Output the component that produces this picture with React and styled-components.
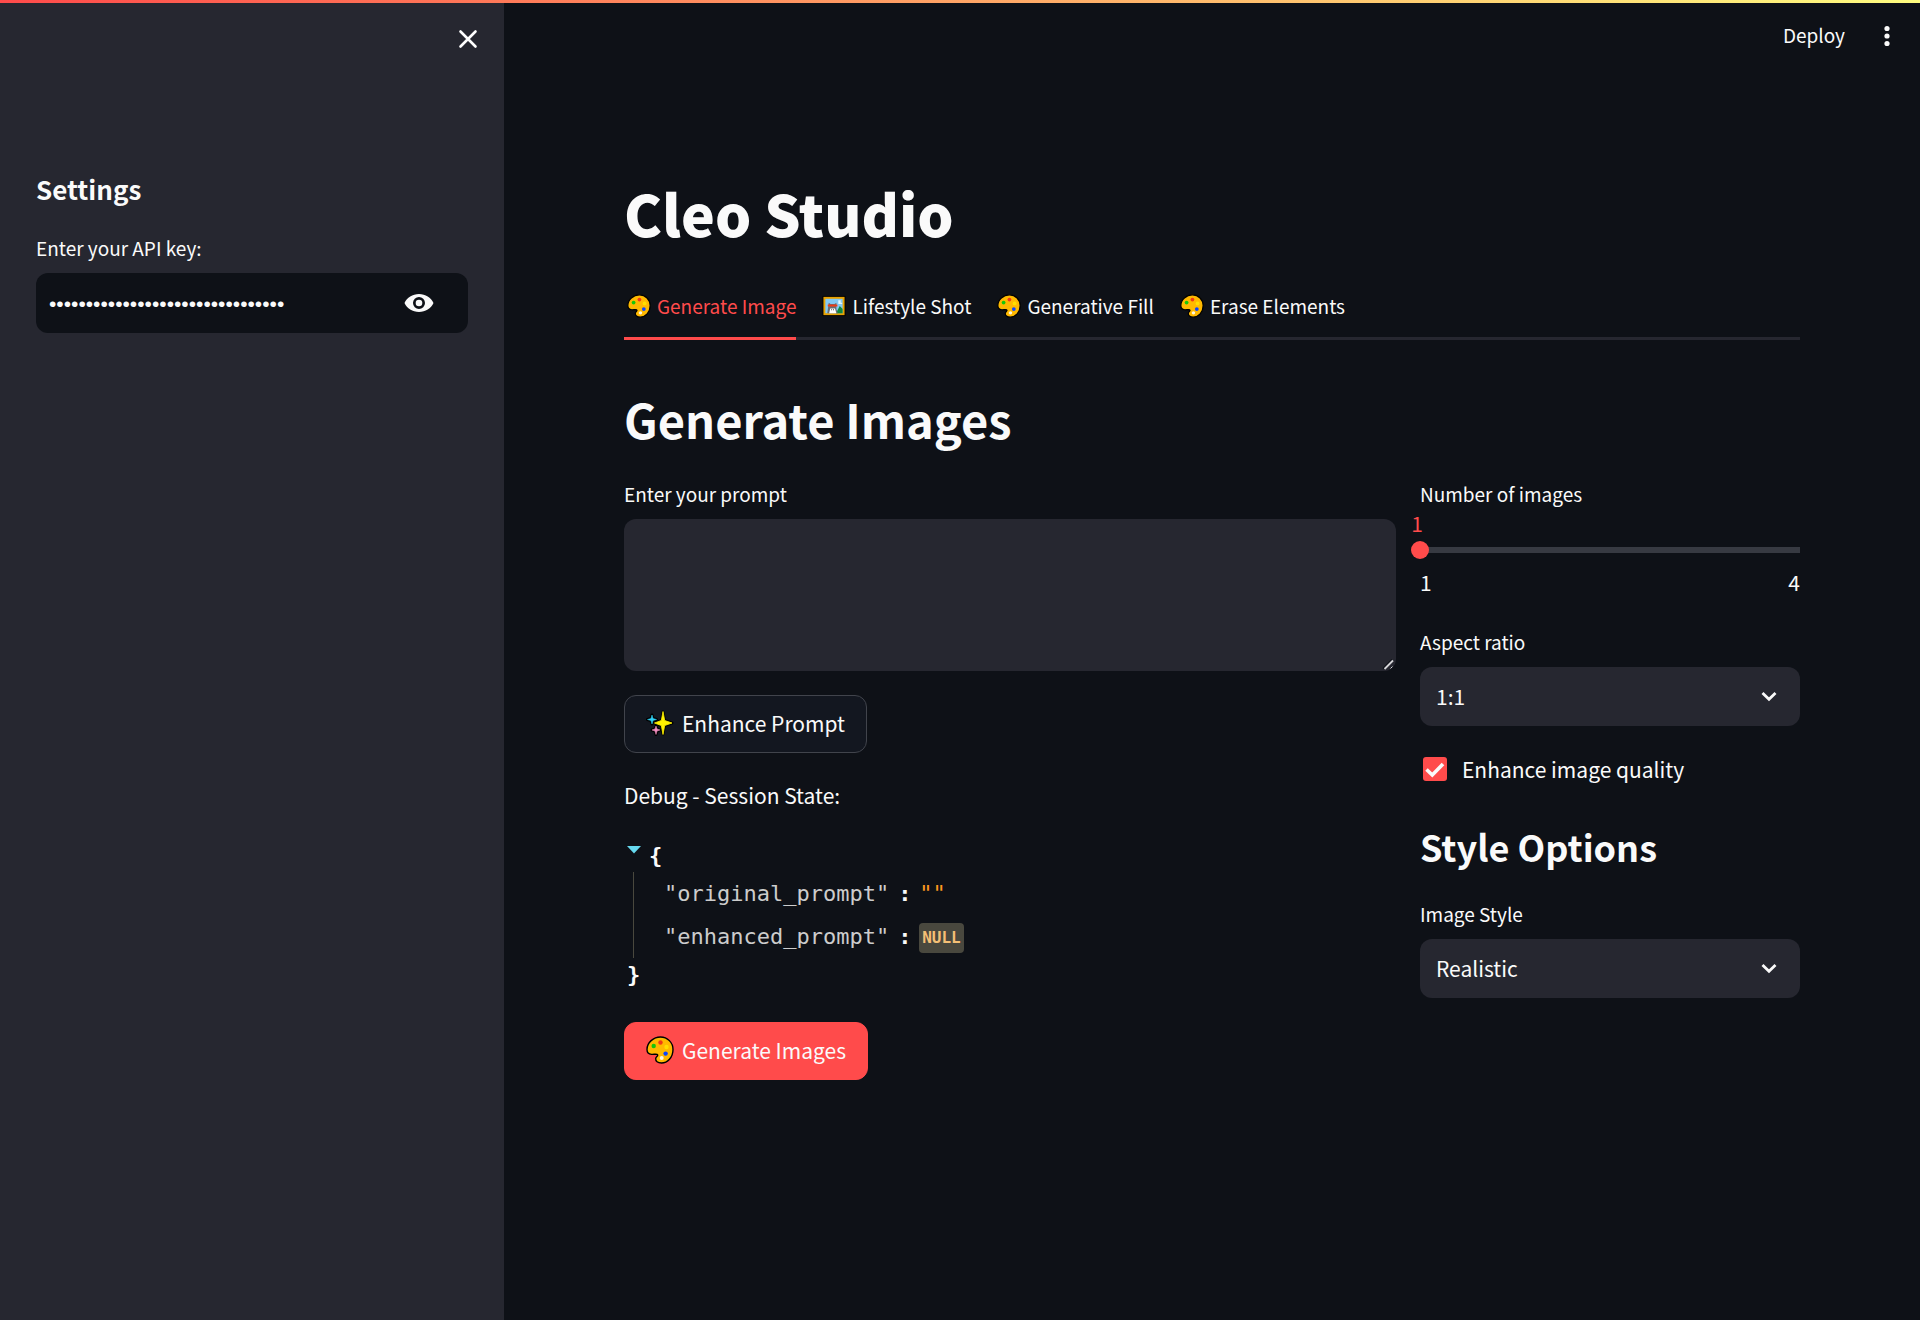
import React, { useState } from "react";
import styled, { createGlobalStyle } from "styled-components";

const sans = `"Noto Sans CJK SC", "Noto Sans", sans-serif`;
const mono = `"DejaVu Sans Mono", monospace`;

const GlobalStyle = createGlobalStyle`
  *, *::before, *::after { box-sizing: border-box; }
  body {
    margin: 0;
    background: #0e1117;
    color: #fafafa;
    font-family: ${sans};
    font-size: 21px;
    line-height: 36px;
  }
  button, input, select, textarea { font: inherit; color: inherit; margin: 0; }
`;

const Page = styled.div`
  display: flex;
  min-height: 100vh;
`;

const Decoration = styled.div`
  position: absolute;
  top: 0;
  left: 0;
  right: 0;
  height: 3px;
  background: linear-gradient(90deg, #ff4b4b, #fffd80);
`;

const Sidebar = styled.aside`
  flex: 0 0 504px;
  background: #262730;
  padding: 18px 36px;
`;

const SidebarTop = styled.div`
  display: flex;
  justify-content: flex-end;
  height: 42px;
  margin-bottom: 108px;
`;

const IconButton = styled.button`
  display: grid;
  place-items: center;
  width: 42px;
  height: 42px;
  padding: 0;
  border: 0;
  background: none;
  cursor: pointer;
  margin-right: ${(p) => p.$pull || 0}px;
`;

const SidebarTitle = styled.h2`
  margin: 0 0 23px;
  font-size: 26px;
  line-height: 42px;
  font-weight: 700;
`;

const Label = styled.label`
  display: block;
  margin-bottom: ${(p) => (p.$tight ? 0 : 10)}px;
  font-size: 19px;
  line-height: 30px;
`;

const PasswordBox = styled.div`
  display: flex;
  align-items: center;
  height: 60px;
  padding: 0 28px 0 13px;
  border-radius: 12px;
  background: #0e1117;
`;

const PasswordInput = styled.input`
  flex: 1;
  min-width: 0;
  padding: 2px 0 0;
  border: 0;
  outline: 0;
  background: none;
  font-family: "Liberation Sans", sans-serif;
  font-size: 21px;
`;

const Main = styled.main`
  flex: 1;
  min-width: 0;
`;

const Header = styled.header`
  display: flex;
  align-items: center;
  justify-content: flex-end;
  gap: 21px;
  height: 72px;
  padding-right: 12px;
`;

const DeployButton = styled.button`
  padding: 0 0 2px;
  border: 0;
  background: none;
  font-size: 19px;
  line-height: 30px;
  cursor: pointer;
`;

const Content = styled.div`
  padding: 100px 120px 120px;
`;

const Title = styled.h1`
  margin: 0 0 24px;
  font-size: 57px;
  line-height: 80px;
  font-weight: 900;
`;

const TabList = styled.div`
  display: flex;
  gap: 23px;
  border-bottom: 3px solid #262730;
`;

const Tab = styled.button`
  display: flex;
  align-items: center;
  gap: 6px;
  height: 64px;
  margin-bottom: -3px;
  padding: 0 0 2px;
  border: 0;
  border-bottom: 3px solid ${(p) => (p.$active ? "#ff4b4b" : "transparent")};
  background: none;
  color: ${(p) => (p.$active ? "#ff4b4b" : "#fafafa")};
  font-size: 19px;
  line-height: 30px;
  white-space: nowrap;
  cursor: pointer;
  > svg { margin-left: 3px; }
`;

const SectionTitle = styled.h2`
  margin: 49px 0 30px;
  font-size: 47px;
  line-height: 60px;
  font-weight: 700;
`;

const Columns = styled.div`
  display: flex;
  align-items: flex-start;
  gap: 24px;
`;

const Column = styled.div`
  flex: 0 0 calc(100% * ${(p) => p.$span} / 3 - 12px);
  min-width: 0;
`;

const PromptBox = styled.div`
  display: grid;
  > * { grid-area: 1 / 1; }
  > svg {
    place-self: end;
    pointer-events: none;
  }
`;

const PromptArea = styled.textarea`
  display: block;
  width: 100%;
  height: 152px;
  padding: 16px;
  border: 0;
  border-radius: 12px;
  outline: 0;
  background: #262730;
  resize: vertical;
  &::-webkit-resizer { background: transparent; }
`;

const ActionButton = styled.button`
  display: flex;
  align-items: center;
  gap: 8px;
  height: 58px;
  margin: ${(p) => (p.$primary ? "31px 0 0" : "24px 0")};
  padding: 0 21px 2px;
  border: 1px solid ${(p) => (p.$primary ? "#ff4b4b" : "#41444c")};
  border-radius: 12px;
  background: ${(p) => (p.$primary ? "#ff4b4b" : "#131720")};
  white-space: nowrap;
  cursor: pointer;
`;

const Text = styled.p`
  margin: 0 0 26px;
`;

const Json = styled.div`
  font-family: ${mono};
  font-size: 22px;
`;

const JsonBrace = styled.div`
  display: flex;
  align-items: center;
  gap: 8px;
  height: 33px;
  padding-left: 3px;
  font-weight: 700;
`;

const JsonBody = styled.div`
  margin-left: 9px;
  padding-left: 30px;
  border-left: 1px solid #49483e;
`;

const JsonRow = styled.div`
  display: flex;
  align-items: center;
  height: 43px;
  white-space: pre;
`;

const JsonKey = styled.span`
  color: #cccccc;
`;

const JsonColon = styled.span`
  width: 30px;
  padding-left: 9px;
  font-weight: 700;
`;

const JsonString = styled.span`
  color: #fd971f;
`;

const JsonNull = styled.span`
  height: 30px;
  margin-top: 3px;
  padding: 0 3px;
  border-radius: 4px;
  background: #49483e;
  color: #f4bf75;
  font-size: 16px;
  line-height: 30px;
  font-weight: 700;
`;

const SliderField = styled.div`
  margin-bottom: 30px;
`;

const SliderValue = styled.output`
  display: block;
  width: 18px;
  margin-left: -12px;
  text-align: center;
  color: #ff4b4b;
  font-size: 21px;
  line-height: 28px;
`;

const Range = styled.input`
  display: block;
  appearance: none;
  width: calc(100% + 18px);
  height: 22px;
  margin: 2px -9px 0;
  background: none;
  &::-webkit-slider-runnable-track {
    height: 6px;
    background: linear-gradient(90deg, transparent 9px, #373a42 9px, #373a42 calc(100% - 9px), transparent calc(100% - 9px));
  }
  &::-webkit-slider-thumb {
    appearance: none;
    width: 18px;
    height: 18px;
    margin-top: -6px;
    border-radius: 50%;
    background: #ff4b4b;
  }
`;

const Ticks = styled.div`
  display: flex;
  justify-content: space-between;
  margin-top: 6px;
  line-height: 30px;
`;

const SelectBox = styled.div`
  display: grid;
  align-items: center;
  > * { grid-area: 1 / 1; }
  > svg {
    justify-self: end;
    margin: 0 17px 2px 0;
    pointer-events: none;
  }
`;

const Select = styled.select`
  appearance: none;
  width: 100%;
  height: 59px;
  padding: 0 16px 2px;
  border: 0;
  border-radius: 12px;
  outline: 0;
  background: #262730;
`;

const CheckLabel = styled.label`
  display: flex;
  align-items: center;
  gap: 15px;
  margin: 25px 0 34px;
  padding-left: 3px;
  height: 36px;
`;

const CheckBox = styled.span`
  display: grid;
  place-items: center;
  > * { grid-area: 1 / 1; }
  > svg { pointer-events: none; }
`;

const CheckInput = styled.input`
  appearance: none;
  width: 24px;
  height: 24px;
  border-radius: 3px;
  background: #ff4b4b;
`;

const SubTitle = styled.h3`
  margin: 0 0 28px;
  font-size: 36px;
  line-height: 50px;
  font-weight: 700;
`;

function Palette({ size }) {
  return (
    <svg width={size} height={size} viewBox="0 0 28 28" aria-hidden="true">
      <path
        d="M14.500 1C21.500 1 27 6.500 27 13.500C27 21.500 21.500 27 15.500 27C11.500 27 9.500 25.200 9.700 22.500C9.900 20.700 12 20.300 11.700 18.900C11.300 17.600 8 18.600 5.500 18.400C2.400 18.200 1 16.200 1 13.500C1 6.500 7.500 1 14.500 1Z"
        fill="#ffb900"
        stroke="#000"
        strokeWidth="1.400"
      />
      <circle cx="14.500" cy="6.500" r="2.200" fill="#f03a17" />
      <circle cx="7.700" cy="10" r="2.200" fill="#16c60c" />
      <circle cx="20.500" cy="11" r="2.200" fill="#ffde00" />
      <circle cx="19.600" cy="17.600" r="2.200" fill="#0b45ff" />
      <circle cx="15.700" cy="22" r="2" fill="#fff8e0" />
    </svg>
  );
}

function Picture({ size }) {
  return (
    <svg width={size} height={size} viewBox="0.500 0 25 25" aria-hidden="true">
      <rect x="1" y="2" width="24" height="21" fill="#000" />
      <rect x="2" y="3" width="22" height="19" fill="#e8a200" />
      <rect x="4" y="5" width="18" height="15" fill="#83c9f4" />
      <path d="M15 20 19 12.500 22 15.500V20Z" fill="#10893e" />
      <path d="M17.500 6.500h2.500v2.500h1.500v1.500h-4Z" fill="#e5f6ff" />
      <path d="M7.500 9 9.500 10.500H13.500L15.500 9V16L17 20H6Z" fill="#6b6e73" />
      <path d="M6.500 11H16.500V13H6.500Z" fill="#f03a17" />
      <path d="M9 15H14L15.500 20H8Z" fill="#fff" />
      <path d="M10 16h1v1h-1zM12 16h1v1h-1z" fill="#444" />
    </svg>
  );
}

function Sparkles() {
  return (
    <svg width="28" height="28" viewBox="0 0 28 28" aria-hidden="true" strokeLinejoin="round">
      <g stroke="#000" strokeWidth="3" fill="#000">
        <path d="M17 3 18.500 11.500 26 14 18.500 16.500 17 25 15.500 16.500 9 14 15.500 11.500Z" />
        <path d="M6 6 7 9.500 10.500 10.500 7 11.500 6 15 5 11.500 1.500 10.500 5 9.500Z" />
        <path d="M10 17 11 20 14 21 11 22 10 25.500 9 22 6 21 9 20Z" />
      </g>
      <path d="M17 2.500 18.700 11.500 26 14 18.700 16.500 17 25.500 15.300 16.500 8.500 14 15.300 11.500Z" fill="#fff100" stroke="#fff100" strokeWidth="0.800" />
      <path d="M6 6 7 9.500 10.500 10.500 7 11.500 6 15 5 11.500 1.500 10.500 5 9.500Z" fill="#31d2f7" stroke="#31d2f7" strokeWidth="0.500" />
      <path d="M10 17 11 20 14 21 11 22 10 25.500 9 22 6 21 9 20Z" fill="#f48fc1" stroke="#f48fc1" strokeWidth="0.500" />
    </svg>
  );
}

function Grip() {
  return (
    <svg width="16" height="16" viewBox="0 0 16 16" aria-hidden="true">
      <path d="M3 13.500 12 4.500" stroke="#0e1117" strokeWidth="1.500" />
      <path d="M4.500 14 13 5.500" stroke="#d5d5d8" strokeWidth="1.800" />
      <path d="M10.500 13.500 12.500 11.500" stroke="#d5d5d8" strokeWidth="1" />
    </svg>
  );
}

function Chevron() {
  return (
    <svg width="28" height="28" viewBox="0 0 28 28" aria-hidden="true">
      <path d="M7.500 11 14 17.200 20.500 11" fill="none" stroke="#fafafa" strokeWidth="2.800" />
    </svg>
  );
}

const tabs = [
  ["Generate Image", Palette],
  ["Lifestyle Shot", Picture],
  ["Generative Fill", Palette],
  ["Erase Elements", Palette],
];

export default function App() {
  const [active, setActive] = useState(0);
  const [count, setCount] = useState(1);
  return (
    <>
      <GlobalStyle />
      <Page>
        <Sidebar>
          <SidebarTop>
            <IconButton aria-label="Close sidebar" $pull={-21}>
              <svg width="20" height="20" viewBox="0 0 20 20" aria-hidden="true">
                <path d="M2.500 2.500 17.500 17.500M17.500 2.500 2.500 17.500" stroke="#fff" strokeWidth="2.600" strokeLinecap="round" />
              </svg>
            </IconButton>
          </SidebarTop>
          <SidebarTitle>Settings</SidebarTitle>
          <Label htmlFor="api-key">Enter your API key:</Label>
          <PasswordBox>
            <PasswordInput id="api-key" type="password" defaultValue={"x".repeat(32)} />
            <IconButton aria-label="Show password">
              <svg width="30" height="20" viewBox="0 0 30 20" aria-hidden="true">
                <path
                  d="M15 1C8.500 1 3 4.700.5 10C3 15.300 8.500 19 15 19S27 15.300 29.500 10C27 4.700 21.500 1 15 1ZM15 16A6 6 0 1 1 15 4A6 6 0 0 1 15 16Z"
                  fill="#fafafa"
                  fillRule="evenodd"
                />
                <circle cx="15" cy="10" r="3.300" fill="#fafafa" />
              </svg>
            </IconButton>
          </PasswordBox>
        </Sidebar>
        <Main>
          <Header>
            <DeployButton>Deploy</DeployButton>
            <IconButton aria-label="Main menu">
              <svg width="6" height="22" viewBox="0 0 6 22" aria-hidden="true" fill="#fafafa">
                <circle cx="3" cy="3.500" r="2.600" />
                <circle cx="3" cy="11" r="2.600" />
                <circle cx="3" cy="18.500" r="2.600" />
              </svg>
            </IconButton>
          </Header>
          <Content>
            <Title>Cleo Studio</Title>
            <TabList role="tablist">
              {tabs.map(([name, Icon], i) => (
                <Tab key={name} role="tab" aria-selected={i === active} $active={i === active} onClick={() => setActive(i)}>
                  <Icon size={24} />
                  {name}
                </Tab>
              ))}
            </TabList>
            <SectionTitle>Generate Images</SectionTitle>
            <Columns>
              <Column $span={2}>
                <Label htmlFor="prompt">Enter your prompt</Label>
                <PromptBox>
                  <PromptArea id="prompt" />
                  <Grip />
                </PromptBox>
                <ActionButton>
                  <Sparkles />
                  Enhance Prompt
                </ActionButton>
                <Text>Debug - Session State:</Text>
                <Json>
                  <JsonBrace>
                    <svg width="14" height="22" viewBox="0 0 14 22" aria-hidden="true">
                      <path d="M0 1H14L7 8.500Z" fill="#66d9ef" />
                    </svg>
                    {"{"}
                  </JsonBrace>
                  <JsonBody>
                    <JsonRow>
                      <JsonKey>"original_prompt"</JsonKey>
                      <JsonColon>:</JsonColon>
                      <JsonString>""</JsonString>
                    </JsonRow>
                    <JsonRow>
                      <JsonKey>"enhanced_prompt"</JsonKey>
                      <JsonColon>:</JsonColon>
                      <JsonNull>NULL</JsonNull>
                    </JsonRow>
                  </JsonBody>
                  <JsonBrace>{"}"}</JsonBrace>
                </Json>
                <ActionButton $primary>
                  <Palette size={28} />
                  Generate Images
                </ActionButton>
              </Column>
              <Column $span={1}>
                <SliderField>
                  <Label htmlFor="count" $tight>Number of images</Label>
                  <SliderValue htmlFor="count">{count}</SliderValue>
                  <Range id="count" type="range" min="1" max="4" value={count} onChange={(e) => setCount(e.target.value)} />
                  <Ticks>
                    <span>1</span>
                    <span>4</span>
                  </Ticks>
                </SliderField>
                <Label htmlFor="ratio">Aspect ratio</Label>
                <SelectBox>
                  <Select id="ratio">
                    <option>1:1</option>
                  </Select>
                  <Chevron />
                </SelectBox>
                <CheckLabel>
                  <CheckBox>
                    <CheckInput type="checkbox" defaultChecked />
                    <svg width="24" height="24" viewBox="0 0 24 24" aria-hidden="true">
                      <path d="M3.500 12.500 9.300 18 20 7" fill="none" stroke="#fafafa" strokeWidth="3.600" />
                    </svg>
                  </CheckBox>
                  Enhance image quality
                </CheckLabel>
                <SubTitle>Style Options</SubTitle>
                <Label htmlFor="style">Image Style</Label>
                <SelectBox>
                  <Select id="style">
                    <option>Realistic</option>
                  </Select>
                  <Chevron />
                </SelectBox>
              </Column>
            </Columns>
          </Content>
        </Main>
      </Page>
      <Decoration />
    </>
  );
}
